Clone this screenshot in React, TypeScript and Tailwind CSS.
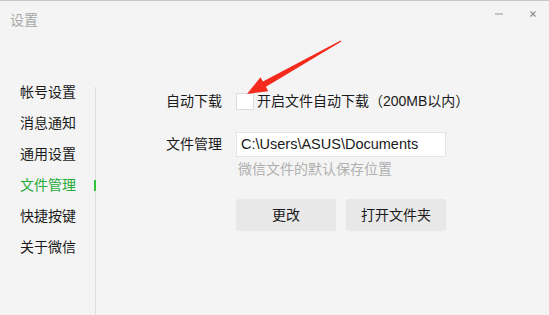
import type { ReactNode } from 'react';

const menu = ['帐号设置', '消息通知', '通用设置', '文件管理', '快捷按键', '关于微信'];
const active = 3;

function Field({ label, children }: { label: string; children: ReactNode }) {
  return (
    <div className="flex items-center h-[25px]">
      <span className="w-[70px] shrink-0 text-[14px] leading-[25px] text-[#1a1a1a]">{label}</span>
      {children}
    </div>
  );
}

export default function App() {
  return (
    <div
      className="relative w-[549px] h-[315px] overflow-hidden bg-[#f4f4f4] border-t border-[#c6c6c6] select-none"
      style={{ fontFamily: '"Liberation Sans", "Noto Sans CJK SC", sans-serif' }}
    >
      {/* title bar */}
      <div className="flex h-[36px] pl-[10px] pr-[13px]">
        <span className="self-center text-[14px] leading-[20px] text-[#a8a8a8] mt-[1px]">设置</span>
        <div className="ml-auto flex items-center gap-[27px] self-start mt-[10px] h-[6px]">
          <div className="w-[8px] h-[2px] bg-[#c4c4c4]" />
          <svg width="6" height="6" viewBox="0 0 6 6" className="block">
            <path d="M0.5 0.5 L5.5 5.5 M5.5 0.5 L0.5 5.5" stroke="#8a8a8a" strokeWidth="1.1" fill="none" />
          </svg>
        </div>
      </div>

      <div className="flex mt-[40px] h-[238px]">
        {/* sidebar */}
        <div className="w-[95px] shrink-0 flex flex-col">
          {menu.map((m, i) => (
            <div
              key={m}
              className={`relative h-[31px] leading-[31px] pl-[20px] text-[14px] ${
                i === active ? 'text-[#24ab38]' : 'text-[#1a1a1a]'
              }`}
            >
              {m}
              {i === active && <div className="absolute right-[-1px] top-[10px] w-[2px] h-[11px] bg-[#32c43c] z-10" />}
            </div>
          ))}
        </div>
        <div className="w-px bg-[#dedede] mt-[10px]" />

        {/* content */}
        <div className="flex flex-col pl-[70px]">
          <div className="mt-[12px]">
            <Field label="自动下载">
              <div className="w-[18px] h-[17px] bg-white border border-[#dcdcdc] shrink-0" />
              <span className="ml-[3px] text-[14px] leading-[25px] text-[#1a1a1a] whitespace-nowrap">
                开启文件自动下载（200MB以内）
              </span>
            </Field>
          </div>

          <div className="mt-[18px]">
            <Field label="文件管理">
              <div className="w-[210px] h-[25px] bg-white border border-[#e4e4e4] pl-[4px] text-[14.5px] leading-[23px] text-[#1a1a1a] whitespace-nowrap overflow-hidden">
                C:\Users\ASUS\Documents
              </div>
            </Field>
          </div>
          <div className="ml-[72px] mt-[2px] h-[20px] text-[14px] leading-[20px] text-[#b0b0b0]">
            微信文件的默认保存位置
          </div>

          <div className="ml-[70px] mt-[20px] flex gap-[10px]">
            <button className="w-[100px] h-[32px] rounded-[3px] bg-[#e8e8e8] text-[14px] text-[#1a1a1a]">更改</button>
            <button className="w-[100px] h-[32px] rounded-[3px] bg-[#e8e8e8] text-[14px] text-[#1a1a1a]">打开文件夹</button>
          </div>
        </div>
      </div>

      {/* annotation arrow */}
      <svg className="absolute inset-0 pointer-events-none" width="549" height="315" viewBox="0 0 549 315">
        <polygon
          points="341.4,40.6 265.9,85.8 268.3,90.2 247,93 260.5,76.2 262.9,80.6 340.6,39.4"
          fill="#f52a1c"
        />
      </svg>
    </div>
  );
}
